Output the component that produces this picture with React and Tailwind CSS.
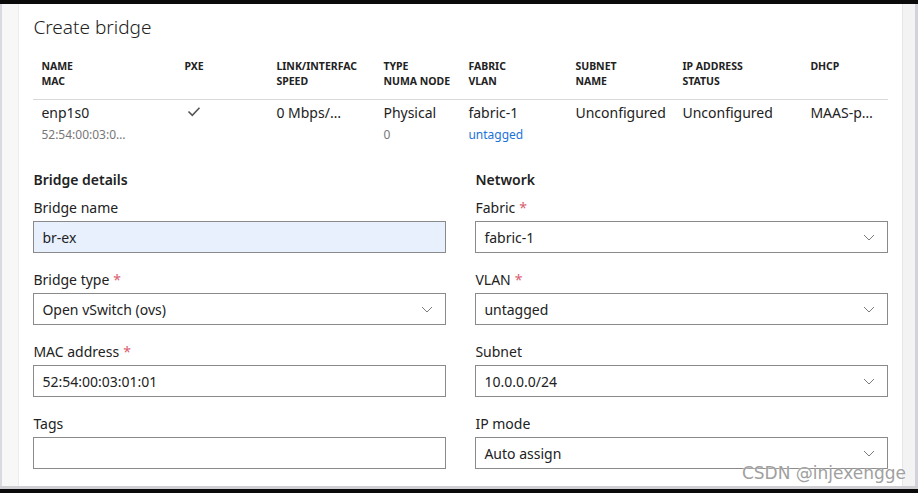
import React from "react";

const cols = "grid grid-cols-[143px_92px_107px_85px_107px_107px_128px_86px]";

function Chevron() {
  return (
    <svg width="12" height="7" viewBox="0 0 12 7" fill="none">
      <path d="M1 1l5 5 5-5" stroke="#7a7a7a" strokeWidth="1" />
    </svg>
  );
}

function Label({ text, required }) {
  return (
    <div className="h-[23px] leading-[20px] text-[14px] text-[#222]">
      {text}
      {required && <span className="text-[#d9606f] ml-[4px]">*</span>}
    </div>
  );
}

function TextField({ label, required, value, filled }) {
  return (
    <div className="mb-[17px]">
      <Label text={label} required={required} />
      <div
        className={
          "h-[32px] border border-[#8a8a8a] px-[8px] flex items-center text-[14px] text-[#222] " +
          (filled ? "bg-[#e8f0fe]" : "bg-white")
        }
      >
        {value}
      </div>
    </div>
  );
}

function SelectField({ label, required, value }) {
  return (
    <div className="mb-[17px]">
      <Label text={label} required={required} />
      <div className="h-[32px] border border-[#8a8a8a] pl-[8px] pr-[12px] flex items-center justify-between text-[14px] text-[#222] bg-white">
        <span>{value}</span>
        <Chevron />
      </div>
    </div>
  );
}

export default function App() {
  const headers = [
    ["NAME", "MAC"],
    ["PXE", ""],
    ["LINK/INTERFAC", "SPEED"],
    ["TYPE", "NUMA NODE"],
    ["FABRIC", "VLAN"],
    ["SUBNET", "NAME"],
    ["IP ADDRESS", "STATUS"],
    ["DHCP", ""],
  ];

  return (
    <div
      className="w-[918px] h-[493px] flex flex-col bg-white overflow-hidden relative"
      style={{ fontFamily: '"Noto Sans", "Open Sans", sans-serif' }}
    >
      <div className="h-[4px] bg-[#0a0a0a]" />
      <div className="flex flex-1 min-h-0">
        <div className="w-[20px] bg-[#f7f7f7] border-l-[2px] border-l-[#d9d9e2] border-r border-r-[#ececec]" />
        <div className="flex-1 bg-white px-[14px] pt-[9px]">
          <h1 className="text-[19px] leading-[28px] text-[#222] font-light">Create bridge</h1>

          <div className="mt-[18px]">
            <div className={cols + " border-b border-[#d9d9d9] pb-[10px]"}>
              {headers.map((h, i) => (
                <div key={i} className="pl-[8px] text-[10.5px] font-bold text-[#222] leading-[15px] whitespace-nowrap overflow-hidden">
                  <div>{h[0]}</div>
                  <div>{h[1] || "\u00a0"}</div>
                </div>
              ))}
            </div>
            <div className={cols + " pt-[3px] text-[14px] text-[#222]"}>
              <div className="pl-[8px]">
                <div className="leading-[20px]">enp1s0</div>
                <div className="mt-[3px] leading-[18px] text-[12px] text-[#777]">52:54:00:03:0…</div>
              </div>
              <div className="pl-[11px] pt-[3px]">
                <svg width="14" height="11" viewBox="0 0 14 11" fill="none">
                  <path d="M1.5 5.5l3.8 3.8L12.5 1.8" stroke="#555" strokeWidth="1.6" />
                </svg>
              </div>
              <div className="pl-[8px] leading-[20px]">0 Mbps/…</div>
              <div className="pl-[8px]">
                <div className="leading-[20px]">Physical</div>
                <div className="mt-[3px] leading-[18px] text-[12px] text-[#777]">0</div>
              </div>
              <div className="pl-[8px]">
                <div className="leading-[20px]">fabric-1</div>
                <div className="mt-[3px] leading-[18px] text-[12px] text-[#1a73d9]">untagged</div>
              </div>
              <div className="pl-[8px] leading-[20px]">Unconfigured</div>
              <div className="pl-[8px] leading-[20px]">Unconfigured</div>
              <div className="pl-[8px] leading-[20px] whitespace-nowrap">MAAS-p…</div>
            </div>
          </div>

          <div className="grid grid-cols-2 gap-x-[29px] mt-[26px]">
            <div>
              <div className="text-[14px] font-semibold leading-[20px] text-[#222] mb-[8px]">Bridge details</div>
              <TextField label="Bridge name" value="br-ex" filled />
              <SelectField label="Bridge type" required value="Open vSwitch (ovs)" />
              <TextField label="MAC address" required value="52:54:00:03:01:01" />
              <TextField label="Tags" value="" />
            </div>
            <div>
              <div className="text-[14px] font-semibold leading-[20px] text-[#222] mb-[8px]">Network</div>
              <SelectField label="Fabric" required value="fabric-1" />
              <SelectField label="VLAN" required value="untagged" />
              <SelectField label="Subnet" value="10.0.0.0/24" />
              <SelectField label="IP mode" value="Auto assign" />
            </div>
          </div>
        </div>
        <div className="w-[16px] bg-[#f3f3f3] border-l border-l-[#e6e6e6] border-r-[3px] border-r-[#d2d2da]" />
      </div>
      <div className="h-[3px] bg-[#d0d0d4]" />
      <div className="h-[4px] bg-[#0a0a0a]" />
      <div
        className="absolute right-[12px] bottom-[10px] text-[17px] leading-[20px] text-[#a0a0a0]"
        style={{ fontFamily: '"DejaVu Sans", sans-serif', textShadow: "0 0 2px #fff" }}
      >
        CSDN @injexengge
      </div>
    </div>
  );
}
